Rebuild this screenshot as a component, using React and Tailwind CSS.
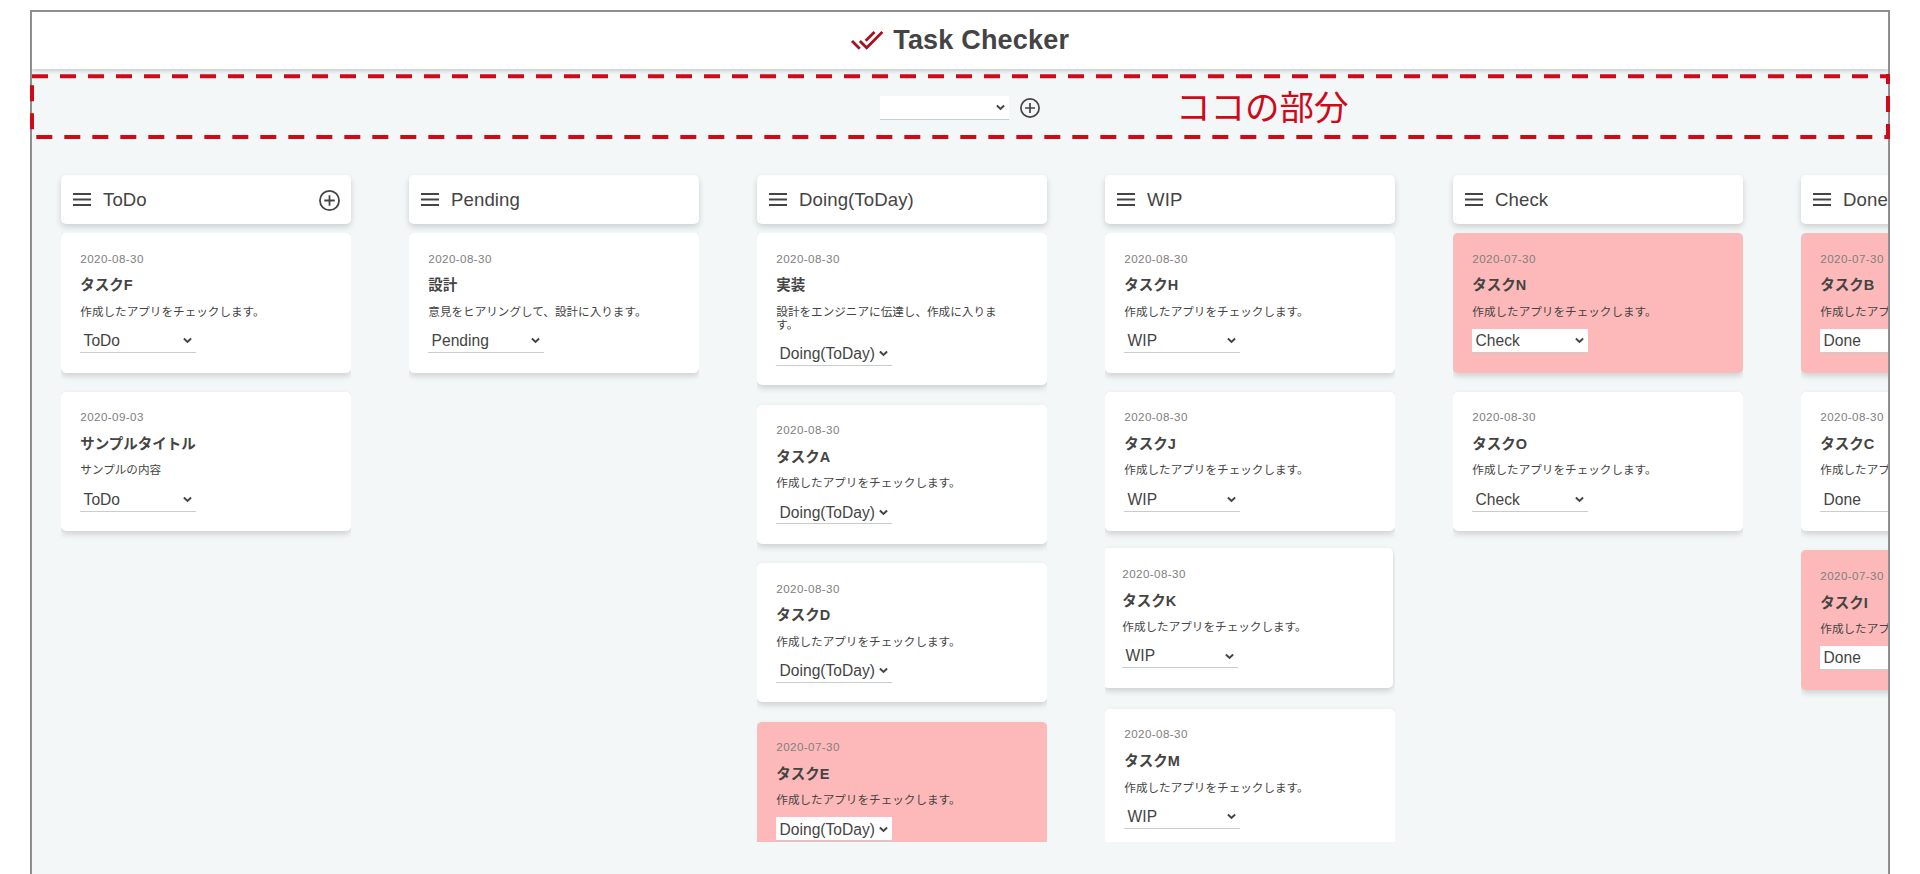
import React from "react";

const COLUMNS = [
  {
    name: "ToDo",
    add: true,
    cards: [
      { date: "2020-08-30", title: "タスクF", body: "作成したアプリをチェックします。" },
      { date: "2020-09-03", title: "サンプルタイトル", body: "サンプルの内容" },
    ],
  },
  {
    name: "Pending",
    cards: [{ date: "2020-08-30", title: "設計", body: "意見をヒアリングして、設計に入ります。" }],
  },
  {
    name: "Doing(ToDay)",
    cards: [
      { date: "2020-08-30", title: "実装", body: "設計をエンジニアに伝達し、作成に入ります。" },
      { date: "2020-08-30", title: "タスクA", body: "作成したアプリをチェックします。" },
      { date: "2020-08-30", title: "タスクD", body: "作成したアプリをチェックします。" },
      { date: "2020-07-30", title: "タスクE", body: "作成したアプリをチェックします。", late: true },
    ],
  },
  {
    name: "WIP",
    cards: [
      { date: "2020-08-30", title: "タスクH", body: "作成したアプリをチェックします。" },
      { date: "2020-08-30", title: "タスクJ", body: "作成したアプリをチェックします。" },
      { date: "2020-08-30", title: "タスクK", body: "作成したアプリをチェックします。", dragged: true },
      { date: "2020-08-30", title: "タスクM", body: "作成したアプリをチェックします。" },
    ],
  },
  {
    name: "Check",
    cards: [
      { date: "2020-07-30", title: "タスクN", body: "作成したアプリをチェックします。", late: true },
      { date: "2020-08-30", title: "タスクO", body: "作成したアプリをチェックします。" },
    ],
  },
  {
    name: "Done",
    cards: [
      { date: "2020-07-30", title: "タスクB", body: "作成したアプリをチェックします。", late: true },
      { date: "2020-08-30", title: "タスクC", body: "作成したアプリをチェックします。" },
      { date: "2020-07-30", title: "タスクI", body: "作成したアプリをチェックします。", late: true },
    ],
  },
];

function Chevron({ className }) {
  return (
    <svg viewBox="0 0 10 7" className={className} fill="none" stroke="#444" strokeWidth="2.2">
      <path d="M1 1.2 5 5 9 1.2" />
    </svg>
  );
}

function PlusCircle({ className }) {
  return (
    <svg viewBox="0 0 20 20" className={className} fill="none" stroke="#444" strokeWidth="1.7">
      <circle cx="10" cy="10" r="9.1" />
      <path d="M10 5v10M5 10h10" />
    </svg>
  );
}

function MenuIcon() {
  return (
    <svg viewBox="0 0 18 13" className="h-[13px] w-[18px] shrink-0" fill="none" stroke="#444" strokeWidth="1.9">
      <path d="M0 1h18M0 6.5h18M0 12h18" />
    </svg>
  );
}

function LogoIcon() {
  return (
    <svg viewBox="0.41 5.59 23.25 13.41" className="h-[18.7px] w-[32.4px] shrink-0" fill="#a90f1c">
      <path d="M18 7l-1.41-1.41-6.34 6.34 1.41 1.41L18 7zm4.24-1.41L11.66 16.17 7.48 12l-1.41 1.41L11.66 19l12-12-1.42-1.41zM.41 13.41L6 19l1.41-1.41L1.83 12 .41 13.41z" />
    </svg>
  );
}

function Card({ card, status }) {
  return (
    <article
      className={`${card.dragged ? "relative -top-[2px] -left-0.5" : ""} mb-[19.3px] w-[290px] shrink-0 rounded-[5px] pt-[18.3px] pr-[19px] pb-[19.6px] pl-[19.3px] shadow-[0_3px_6px_rgba(0,0,0,0.16)] ${card.late ? "bg-[#fdb9b9]" : "bg-white"}`}
    >
      <p className="h-[13px] text-[11.6px] leading-[14px] tracking-[0.42px] text-[#808080]">{card.date}</p>
      <h3 className="mt-[11.8px] h-[18px] text-[14.5px] leading-[19px] font-bold">{card.title}</h3>
      <p className="mt-[10.9px] w-[232px] text-[11.6px] leading-[12.8px]">
        <span className="relative top-[0.6px]">{card.body}</span>
      </p>
      <div className="mt-[10.9px] flex h-[24px] w-[116px] items-center justify-between border-b border-[#c9cccc] bg-white pt-px pr-[4px] pl-[3.3px]">
        <span className="text-[15.6px] leading-none whitespace-nowrap">{status}</span>
        <Chevron className="h-[7px] w-[9px] shrink-0" />
      </div>
    </article>
  );
}

function Column({ column }) {
  return (
    <section className="flex w-[290px] shrink-0 flex-col">
      <header className="flex h-[48.5px] shrink-0 items-center rounded-[5px] bg-white pr-[11px] pl-3 shadow-[0_3px_6px_rgba(0,0,0,0.16)]">
        <MenuIcon />
        <h2 className="ml-[12px] flex-1 pt-[2px] text-[18.6px] leading-none tracking-[0.1px]">{column.name}</h2>
        {column.add && <PlusCircle className="mt-px h-[21px] w-[21px]" />}
      </header>
      <div className="mt-[9.5px] flex h-[609px] flex-col overflow-hidden">
        {column.cards.map((card) => (
          <Card key={card.title} card={card} status={column.name} />
        ))}
      </div>
    </section>
  );
}

export default function App() {
  return (
    <div className="relative h-[874px] w-[1920px] overflow-hidden bg-white pt-[10px] pl-[30px] font-['Liberation_Sans','Noto_Sans_CJK_JP',sans-serif] text-[#444]">
      <div className="flex h-[870px] w-[1860px] flex-col overflow-hidden border-2 border-[#8e8e8e] bg-[#f3f7f8]">
        <header className="z-10 flex h-[57px] shrink-0 items-center justify-center bg-white shadow-[0_2px_4px_rgba(0,0,0,0.18)]">
          <LogoIcon />
          <h1 className="ml-[10px] text-[27px] leading-none font-bold tracking-[0.2px]">Task Checker</h1>
        </header>
        <div className="flex h-[106.3px] shrink-0 justify-center pt-[27px]">
          <div className="flex h-[24px] w-[129px] items-center justify-end border-b border-[#c9cccc] bg-white pr-[4px]">
            <Chevron className="h-[7px] w-[9px]" />
          </div>
          <PlusCircle className="mt-[2px] ml-[11.5px] h-[20px] w-[20px]" />
        </div>
        <main className="flex gap-[58px] pl-[29px]">
          {COLUMNS.map((column) => (
            <Column key={column.name} column={column} />
          ))}
        </main>
      </div>
      <svg viewBox="0 0 1860 66" className="absolute top-[74px] left-[30px] z-20 h-[66px] w-[1860px]" fill="none" stroke="#cf0a18" strokeWidth="4">
        <path d="M2 2.2H1860" strokeDasharray="16 12" />
        <path d="M1858 0V65" strokeDasharray="16 12" strokeDashoffset="6" />
        <path d="M6.3 63H1860" strokeDasharray="16 12" />
        <path d="M2 11.3V63" strokeDasharray="16 12" />
      </svg>
      <p className="absolute top-[86px] left-[1176px] z-20 font-['Noto_Sans_CJK_JP',sans-serif] text-[34.5px] leading-[38px] text-[#cf0a18]">ココの部分</p>
    </div>
  );
}
